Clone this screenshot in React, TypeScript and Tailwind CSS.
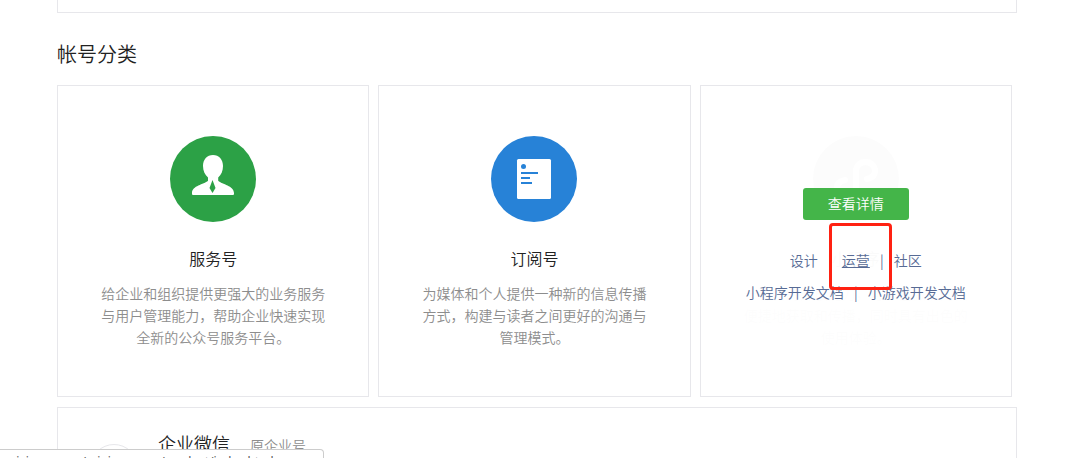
import type { ReactNode } from "react";

const fontStack = "font-['Noto_Sans_CJK_SC',sans-serif]";

function ServiceIcon() {
  return (
    <svg width="86" height="86" viewBox="0 0 86 86" aria-hidden="true">
      <circle cx="43" cy="43" r="43" fill="#2ca146" />
      <path
        d="M43 19c6 0 10 4.500 10 11 0 5-1.800 9-4.800 11.500v3.200c4 3.800 15.800 4.800 15.800 12.300V58a1 1 0 0 1-1 1H23a1 1 0 0 1-1-1v-1c0-7.500 11.800-8.500 16-12.300v-3.200C35 39 33 35 33 30c0-6.500 4-11 10-11z"
        fill="#fff"
      />
      <path d="M42.500 44l1.500 4 1.500 4-3 5-3-5 1.500-4z" fill="#2ca146" />
    </svg>
  );
}

function SubscribeIcon() {
  return (
    <svg width="86" height="86" viewBox="0 0 86 86" aria-hidden="true">
      <circle cx="43" cy="43" r="43" fill="#2782d7" />
      <rect x="26" y="23" width="34" height="40" rx="1.500" fill="#fff" />
      <circle cx="32.500" cy="30.500" r="2.500" fill="#2782d7" />
      <path d="M30 37h17M30 42h9M30 47h11" stroke="#2782d7" strokeWidth="2" />
    </svg>
  );
}

function MiniProgramIcon() {
  return (
    <svg width="86" height="86" viewBox="0 0 86 86" aria-hidden="true">
      <circle cx="43" cy="43" r="43" fill="#6c6c6c" />
      <path
        d="M54 43c5-1 8-4 8-8 0-5-4-9-9.500-9s-9.500 4-9.500 9v17c0 5-4 9-9.500 9s-9.500-4-9.500-9c0-4 3-7 8-8"
        fill="none"
        stroke="#fff"
        strokeWidth="6"
        strokeLinecap="round"
      />
    </svg>
  );
}

interface AccountCardProps {
  icon: ReactNode;
  title: string;
  desc: string;
  children?: ReactNode;
}

function AccountCard({ icon, title, desc, children }: AccountCardProps) {
  return (
    <li className="relative flex flex-col items-center border border-[#e7e7eb] pt-[50px] pb-12">
      {icon}
      <h3 className="mt-[23px] text-[16px] leading-[26px] text-[#222]">{title}</h3>
      <p className="mt-[11px] w-[226px] text-center text-[14px] leading-[22px] text-[#8d8d8d]">{desc}</p>
      {children}
    </li>
  );
}

function LinkRow({ links }: { links: string[] }) {
  return (
    <div className="flex text-[14px] leading-8 text-[#576b95]">
      {links.map((link, i) => (
        <span key={link} className="flex">
          {i > 0 && <span className="w-6 text-center">|</span>}
          <a href="#" className={link === "运营" ? "underline" : "hover:underline"}>
            {link}
          </a>
        </span>
      ))}
    </div>
  );
}

export default function App() {
  return (
    <div className={`relative h-screen overflow-hidden bg-white pr-12 pl-[57px] font-[350] ${fontStack}`}>
      <div className="h-[13px] border border-t-0 border-[#e7e7eb]" />

      <h2 className="mt-[26px] text-[20px] leading-[30px] text-[#222]">帐号分类</h2>

      <ul className="mt-4 grid grid-cols-3 gap-[9px] pr-[5px]">
        <AccountCard
          icon={<ServiceIcon />}
          title="服务号"
          desc="给企业和组织提供更强大的业务服务与用户管理能力，帮助企业快速实现全新的公众号服务平台。"
        />
        <AccountCard
          icon={<SubscribeIcon />}
          title="订阅号"
          desc="为媒体和个人提供一种新的信息传播方式，构建与读者之间更好的沟通与管理模式。"
        />
        <AccountCard
          icon={<MiniProgramIcon />}
          title="小程序"
          desc="一种新的开放能力，可以在微信内被便捷地获取和传播，同时具有出色的使用体验。"
        >
          {/* Hover layer */}
          <div className="absolute inset-0 flex flex-col items-center bg-white/98 pt-[102px]">
            <button type="button" className="h-8 w-[106px] rounded-[3px] bg-[#44b549] pb-0.5 text-[14px] text-white">
              查看详情
            </button>
            <div className="mt-6 flex flex-col items-center">
              <LinkRow links={["设计", "运营", "社区"]} />
              <LinkRow links={["小程序开发文档", "小游戏开发文档"]} />
            </div>
            <div className="absolute top-[137px] left-[128px] h-[67px] w-[63px] rounded-[4px] border-3 border-[#ff2112]" />
          </div>
        </AccountCard>
      </ul>

      <section className="mt-[10px] flex border border-[#e7e7eb] px-8 pt-[21px]">
        <div className="mt-[15px] size-12 rounded-full border border-[#e7e7eb]" />
        <div className="ml-5 flex items-baseline gap-5">
          <h3 className="text-[18px] leading-7 text-[#222]">企业微信</h3>
          <span className="text-[14px] text-[#8d8d8d]">原企业号</span>
        </div>
      </section>

      {/* Link address bar */}
      <div className="absolute top-[449px] left-0 h-6 w-[324px] overflow-hidden rounded-tr-[4px] border border-l-0 border-[#ccc] bg-white font-['Noto_Sans',sans-serif] text-[12px] leading-6 font-normal whitespace-nowrap text-[#555]">
        weixin.qq.com/miniprogram/product/index.html
      </div>
    </div>
  );
}
